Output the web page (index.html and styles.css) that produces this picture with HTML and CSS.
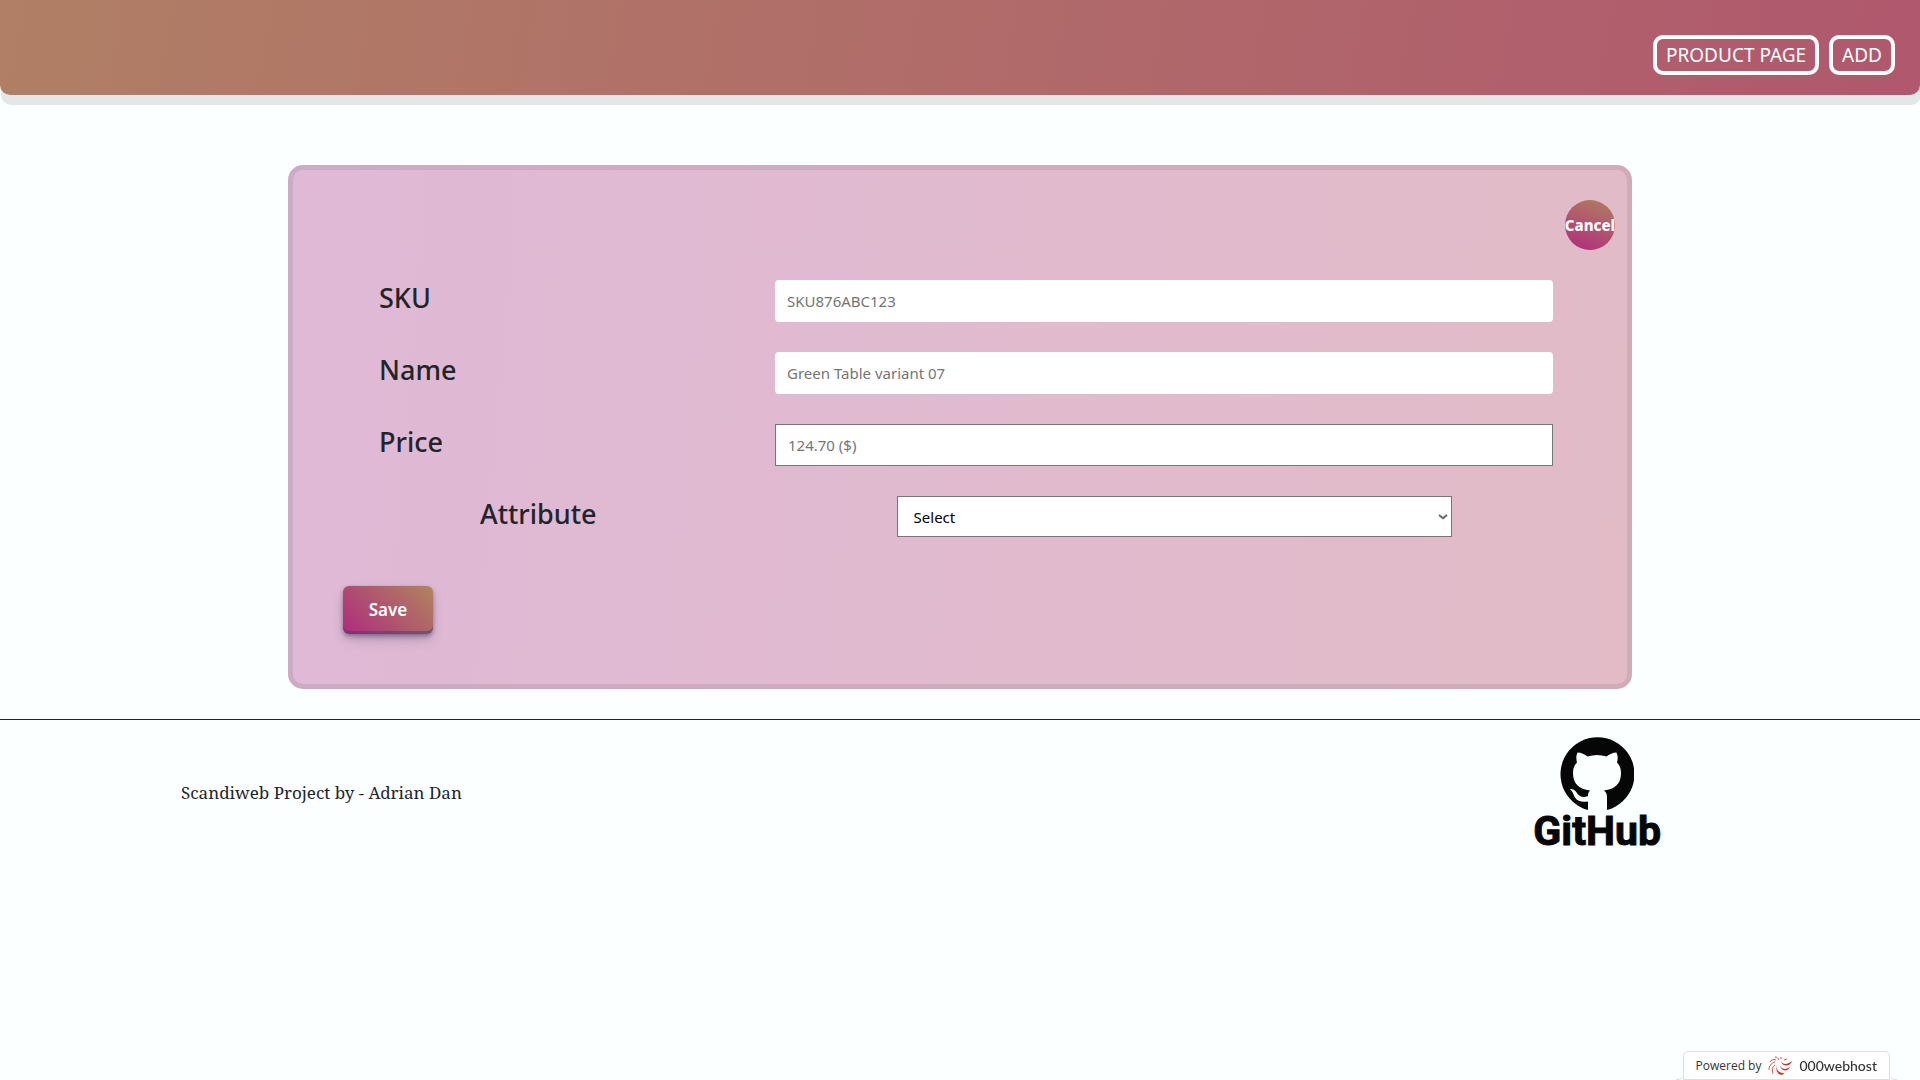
FILE: index.html
```html
<!DOCTYPE html>
<html lang="en">
<head>
<meta charset="utf-8">
<meta name="viewport" content="width=device-width, initial-scale=1">
<title>Add product</title>
<link rel="stylesheet" href="styles.css">
</head>
<body>
<header class="site-header">
  <nav class="site-nav">
    <a class="nav-link" href="#products">PRODUCT PAGE</a>
    <a class="nav-link" href="#add">ADD</a>
  </nav>
</header>
<main>
  <form class="card">
    <div class="card-top"><button class="cancel" type="button">Cancel</button></div>
    <div class="fields">
      <div class="field">
        <label for="sku">SKU</label>
        <input id="sku" type="text" placeholder="SKU876ABC123">
      </div>
      <div class="field">
        <label for="name">Name</label>
        <input id="name" type="text" placeholder="Green Table variant 07">
      </div>
      <div class="field">
        <label for="price">Price</label>
        <input class="outlined" id="price" type="text" placeholder="124.70 ($)">
      </div>
      <div class="field field-inset">
        <label for="attribute">Attribute</label>
        <div class="select-wrap">
          <select id="attribute"><option>Select</option></select>
          <svg class="chevron" viewBox="0 0 10 6" aria-hidden="true"><path d="M1 1l4 3.2L9 1"/></svg>
        </div>
      </div>
    </div>
    <button class="save" type="submit">Save</button>
  </form>
</main>
<footer class="site-footer">
  <p class="credit">Scandiweb Project by - Adrian Dan</p>
  <a class="github" href="#github">
    <svg class="github-mark" viewBox="0 0 74 74" aria-hidden="true">
      <path d="M28 73A37 37 0 1 1 47 73L47 60C47 57 46 55 44 53.500C55 52 61 47 61 36C61 31 59.500 28 57 25.500C58 22 58 18.500 56.500 15.500C53 15.500 49 17.500 46.500 19.500C40 17.500 34 17.500 27.500 19.500C25 17.500 21 15.500 17.500 15.500C16 18.500 16 22 17 25.500C14.500 28 13 31 13 36C13 47 19 52 30 53.500C28.500 55 28 56.500 28 59C23 61 19 59.500 17 56C15 52.500 12.500 51.500 9.500 52C13 54 13 57 15 60.500C17.500 64.500 22 65.500 28 64.500Z"/>
    </svg>
    <span class="github-name">GitHub</span>
  </a>
</footer>
<a class="host-badge" href="#host">
  <span class="powered">Powered by</span>
  <svg class="host-logo" viewBox="0 0 24 20" aria-hidden="true">
    <path d="M12 8c0 4 4 7 10 3-2 5-10 5-10-3zM13 5c2 4 6 4 11 0-2 6-10 6-11 0zM9 9c-1 4 1 8 7 8-1 4-10 1-7-8z"/>
    <path class="thin" d="M7 9c-3 2-3 5-2 9M7 6C3 7 1 10 1 14M8 4C5 3 3 4 2 6M11 4C10 2 9 1 7 1M13 3V1M16 4l3-1"/>
  </svg>
  <span class="host-name">000webhost</span>
</a>
</body>
</html>
```
FILE: styles.css
```css
* { box-sizing: border-box; }

body {
  margin: 0;
  background: #fbffff;
  color: #212529;
  font: 16px/24px "Open Sans", "Noto Sans", sans-serif;
}

.site-header {
  display: flex;
  justify-content: flex-end;
  padding: 35px 25px 20px;
  border-radius: 0 0 10px 10px;
  background: linear-gradient(100deg, #b07f65, #b0586e);
  box-shadow: 1px 10px 0 #e4e7e7;
}

.site-nav { display: flex; gap: 10px; }

.nav-link {
  padding: 4px 9px;
  border: 4px solid #fff;
  border-radius: 10px;
  color: #fff;
  font-family: "Noto Sans", sans-serif;
  font-size: 19px;
  line-height: 24px;
  text-decoration: none;
}

.card {
  width: 70%;
  margin: 70px auto 30px;
  padding: 30px 0 50px;
  border: 5px solid rgba(0, 0, 0, .08);
  border-radius: 15px;
  background: linear-gradient(95deg, #dfb9d6, #e2bbc7) border-box;
}

.card-top { display: flex; justify-content: flex-end; padding-right: 12px; }

.cancel {
  display: flex;
  align-items: center;
  justify-content: center;
  width: 50px;
  height: 50px;
  padding: 0;
  border: 0;
  border-radius: 50%;
  background: linear-gradient(20deg, #b02a7d, #b08060);
  color: #fff;
  font: 800 15px/24px "Noto Sans", sans-serif;
}

.fields {
  display: grid;
  gap: 30px;
  margin: 30px 74px 49px 86px;
}

.field { display: grid; grid-template-columns: 1fr 2fr; gap: 7px; }

.field-inset {
  grid-template-columns: 3fr 4fr;
  gap: 0;
  margin: 0 101px;
}

.field label {
  font: 500 27px/36px "Noto Sans", sans-serif;
}

.field input,
.field select {
  display: block;
  width: 100%;
  height: 42px;
  padding: 0 12px;
  border: 0;
  border-radius: 4px;
  background: #fff;
  color: #000;
  font: 15px/24px "Noto Sans", sans-serif;
}

.field input::placeholder { color: #757575; opacity: 1; }

.field input.outlined,
.field select { border: 1px solid #767676; border-radius: 0; }

.field select { height: 41px; padding: 0 16px; appearance: none; }

.select-wrap { position: relative; }

.chevron {
  position: absolute;
  top: 18px;
  right: 4px;
  width: 10px;
  height: 6px;
  fill: none;
  stroke: #666;
  stroke-width: 2;
}

.save {
  display: block;
  width: 90px;
  height: 48px;
  margin-left: 50px;
  padding: 0;
  border: 0;
  border-radius: 6px;
  background: linear-gradient(45deg, #b02a7d, #b0855f);
  box-shadow: 0 2px 4px rgba(45, 35, 66, .4), 0 7px 13px -3px rgba(45, 35, 66, .3), inset 0 -3px 0 rgba(58, 65, 111, .5);
  color: #fff;
  font: 600 17px/24px "Noto Sans", sans-serif;
}

.site-footer {
  display: flex;
  align-items: flex-start;
  justify-content: space-between;
  padding: 17px 259px 0 181px;
  border-top: 1px solid #212529;
}

.credit {
  margin: 44px 0 0;
  font: 17px/24px "Noto Serif", "Liberation Serif", serif;
}

.github {
  display: flex;
  flex-direction: column;
  align-items: center;
  color: #060606;
  text-decoration: none;
}

.github-mark { width: 74px; height: 74px; fill: #060606; }

.github-name {
  font: 700 41px/40px Roboto, sans-serif;
  -webkit-text-stroke: 1px #060606;
}

.host-badge {
  position: fixed;
  right: 30px;
  bottom: 0;
  display: flex;
  align-items: center;
  gap: 7px;
  height: 29px;
  padding: 0 12px;
  border: 1px solid #dcdfe0;
  border-radius: 5px 5px 0 0;
  background: #fff;
  color: #333;
  font-size: 12px;
  text-decoration: none;
}

.host-badge::before,
.host-badge::after {
  content: "";
  position: absolute;
  bottom: -1px;
  width: 8px;
  height: 6px;
  border-bottom: 1px solid #dcdfe0;
}

.host-badge::before { right: 100%; border-bottom-right-radius: 6px; }
.host-badge::after { left: 100%; border-bottom-left-radius: 6px; }

.host-logo { width: 24px; height: 20px; fill: #c0392f; }
.host-logo .thin { fill: none; stroke: #c9564c; }
.host-name { font: 500 14px/24px Lato, sans-serif; }
```
